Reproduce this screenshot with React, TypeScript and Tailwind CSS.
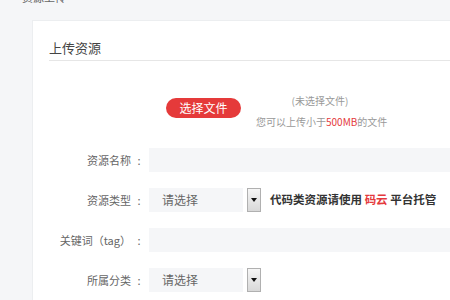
import React from 'react';

const font = { fontFamily: '"Noto Sans CJK SC", "Noto Sans", sans-serif' };

const Arrow: React.FC = () => (
  <div className="ml-[4px] w-[14px] h-[24px] border border-[#b0b0b0] bg-gradient-to-b from-[#f6f6f6] to-[#d8d8d8] flex items-center justify-center">
    <svg width="6" height="4" viewBox="0 0 6 4">
      <path d="M0 0 H6 L3 4 Z" fill="#111" />
    </svg>
  </div>
);

const Row: React.FC<{ label: string; children: React.ReactNode }> = ({ label, children }) => (
  <div className="h-[40px] flex items-center">
    <div className="w-[98px] mr-[2px] flex justify-end text-[11px] text-[#666] whitespace-nowrap">
      <span>{label}</span>
      <span className="w-[16px] text-center">:</span>
    </div>
    {children}
  </div>
);

const Select: React.FC = () => (
  <>
    <div className="w-[94px] h-[24px] bg-[#f5f6f8] pl-[13px] flex items-center text-[12px] text-[#666]">请选择</div>
    <Arrow />
  </>
);

export default function App() {
  return (
    <div className="w-[450px] h-[300px] overflow-hidden bg-[#f5f6f8]" style={font}>
      <div className="-mt-[8px] mb-[17px] h-[11px] pl-[22px] text-[11px] leading-[11px] text-[#666]">资源上传</div>
      <div className="ml-[32px] w-[640px] h-[400px] bg-white border-t border-l border-[#eceef0] px-[16px]">
        <div className="h-[40px] pt-[17px] text-[13px] leading-[20px] text-[#444] border-b border-[#e6e6e6]">上传资源</div>
        <div className="h-[79px] pt-[29px] flex items-start">
          <button className="ml-[117px] mt-[8px] w-[75px] h-[20px] rounded-full bg-[#e53a3a] text-white text-[12px] leading-[20px]">
            选择文件
          </button>
          <div className="ml-[15px] w-[128px] text-center text-[10px] leading-[21px] text-[#999]">
            <div>(未选择文件)</div>
            <div className="whitespace-nowrap">
              您可以上传小于<span className="text-[#e4393c]">500MB</span>的文件
            </div>
          </div>
        </div>
        <Row label="资源名称">
          <div className="w-[400px] h-[24px] bg-[#f5f6f8]" />
        </Row>
        <Row label="资源类型">
          <Select />
          <div className="ml-[9px] text-[11.5px] font-bold text-[#333] whitespace-nowrap">
            代码类资源请使用 <span className="text-[#e4393c]">码云</span> 平台托管
          </div>
        </Row>
        <Row label="关键词（tag）">
          <div className="w-[400px] h-[24px] bg-[#f5f6f8]" />
        </Row>
        <Row label="所属分类">
          <Select />
        </Row>
      </div>
    </div>
  );
}
